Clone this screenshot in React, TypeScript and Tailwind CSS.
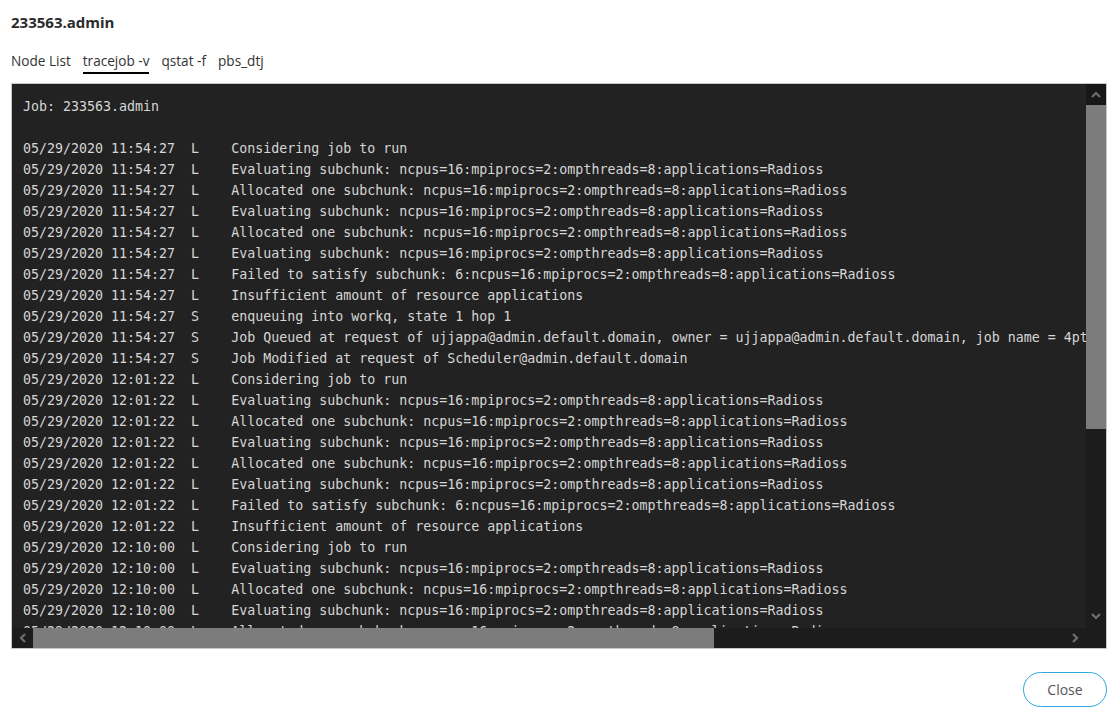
import React from "react";

const sub = "ncpus=16:mpiprocs=2:ompthreads=8:applications=Radioss";

const rows: [string, string, string][] = [
  ["05/29/2020 11:54:27", "L", "Considering job to run"],
  ["05/29/2020 11:54:27", "L", `Evaluating subchunk: ${sub}`],
  ["05/29/2020 11:54:27", "L", `Allocated one subchunk: ${sub}`],
  ["05/29/2020 11:54:27", "L", `Evaluating subchunk: ${sub}`],
  ["05/29/2020 11:54:27", "L", `Allocated one subchunk: ${sub}`],
  ["05/29/2020 11:54:27", "L", `Evaluating subchunk: ${sub}`],
  ["05/29/2020 11:54:27", "L", `Failed to satisfy subchunk: 6:${sub}`],
  ["05/29/2020 11:54:27", "L", "Insufficient amount of resource applications"],
  ["05/29/2020 11:54:27", "S", "enqueuing into workq, state 1 hop 1"],
  [
    "05/29/2020 11:54:27",
    "S",
    "Job Queued at request of ujjappa@admin.default.domain, owner = ujjappa@admin.default.domain, job name = 4pt_bending_0000, queue = workq",
  ],
  ["05/29/2020 11:54:27", "S", "Job Modified at request of Scheduler@admin.default.domain"],
  ["05/29/2020 12:01:22", "L", "Considering job to run"],
  ["05/29/2020 12:01:22", "L", `Evaluating subchunk: ${sub}`],
  ["05/29/2020 12:01:22", "L", `Allocated one subchunk: ${sub}`],
  ["05/29/2020 12:01:22", "L", `Evaluating subchunk: ${sub}`],
  ["05/29/2020 12:01:22", "L", `Allocated one subchunk: ${sub}`],
  ["05/29/2020 12:01:22", "L", `Evaluating subchunk: ${sub}`],
  ["05/29/2020 12:01:22", "L", `Failed to satisfy subchunk: 6:${sub}`],
  ["05/29/2020 12:01:22", "L", "Insufficient amount of resource applications"],
  ["05/29/2020 12:10:00", "L", "Considering job to run"],
  ["05/29/2020 12:10:00", "L", `Evaluating subchunk: ${sub}`],
  ["05/29/2020 12:10:00", "L", `Allocated one subchunk: ${sub}`],
  ["05/29/2020 12:10:00", "L", `Evaluating subchunk: ${sub}`],
  ["05/29/2020 12:10:00", "L", `Allocated one subchunk: ${sub}`],
  ["05/29/2020 12:10:00", "L", `Evaluating subchunk: ${sub}`],
];

const tabs = ["Node List", "tracejob -v", "qstat -f", "pbs_dtj"];

function Chevron({ dir }: { dir: "up" | "down" | "left" | "right" }) {
  const rot = { up: 0, right: 90, down: 180, left: 270 }[dir];
  return (
    <svg width="10" height="10" viewBox="0 0 10 10" style={{ transform: `rotate(${rot}deg)` }}>
      <path d="M1 7 L5 3 L9 7" fill="none" stroke="#6e6e6e" strokeWidth="2.2" />
    </svg>
  );
}

export default function App() {
  return (
    <div
      className="h-[720px] w-[1118px] bg-white text-[#333] flex flex-col px-[11px]"
      style={{ fontFamily: '"Open Sans", "Noto Sans", sans-serif' }}
    >
      <h1 className="mt-[11px] text-[15px] font-bold leading-[22px] text-[#2b2b2b]">233563.admin</h1>

      <div className="mt-[17px] flex gap-[12px] text-[13.6px] leading-[22px]">
        {tabs.map((t) => (
          <span
            key={t}
            className={t === "tracejob -v" ? "border-b-2 border-black" : "border-b-2 border-transparent"}
          >
            {t}
          </span>
        ))}
      </div>

      {/* console */}
      <div className="mt-[9px] h-[566px] w-[1096px] border border-[#c8c8c8] bg-[#222] flex flex-col">
        <div className="flex flex-1 min-h-0">
          <div
            className="flex-1 overflow-hidden whitespace-pre text-[13.3px] leading-[21px] text-[#d6d6d6] pl-[11px] pt-[12px]"
            style={{ fontFamily: '"DejaVu Sans Mono", "Liberation Mono", monospace' }}
          >
            <div>Job: 233563.admin</div>
            <div>&nbsp;</div>
            {rows.map((r, i) => (
              <div key={i}>{`${r[0]}  ${r[1]}    ${r[2]}`}</div>
            ))}
          </div>
          <div className="w-[20px] bg-[#1c1c1c] flex flex-col">
            <div className="h-[21px] bg-[#171717] flex items-center justify-center">
              <Chevron dir="up" />
            </div>
            <div className="h-[324px] bg-[#7c7c7c]" />
            <div className="flex-1" />
            <div className="h-[24px] flex items-center justify-center">
              <Chevron dir="down" />
            </div>
          </div>
        </div>
        <div className="h-[20px] flex bg-[#1c1c1c]">
          <div className="w-[21px] flex items-center justify-center">
            <Chevron dir="left" />
          </div>
          <div className="w-[681px] bg-[#7c7c7c]" />
          <div className="flex-1" />
          <div className="w-[22px] flex items-center justify-center">
            <Chevron dir="right" />
          </div>
          <div className="w-[20px] bg-[#1c1c1c]" />
        </div>
      </div>

      <div className="mt-[23px] flex justify-end">
        <button className="h-[35px] w-[84px] rounded-full border border-[#2ea8e0] text-[14px] text-[#555] bg-white">
          Close
        </button>
      </div>
    </div>
  );
}
